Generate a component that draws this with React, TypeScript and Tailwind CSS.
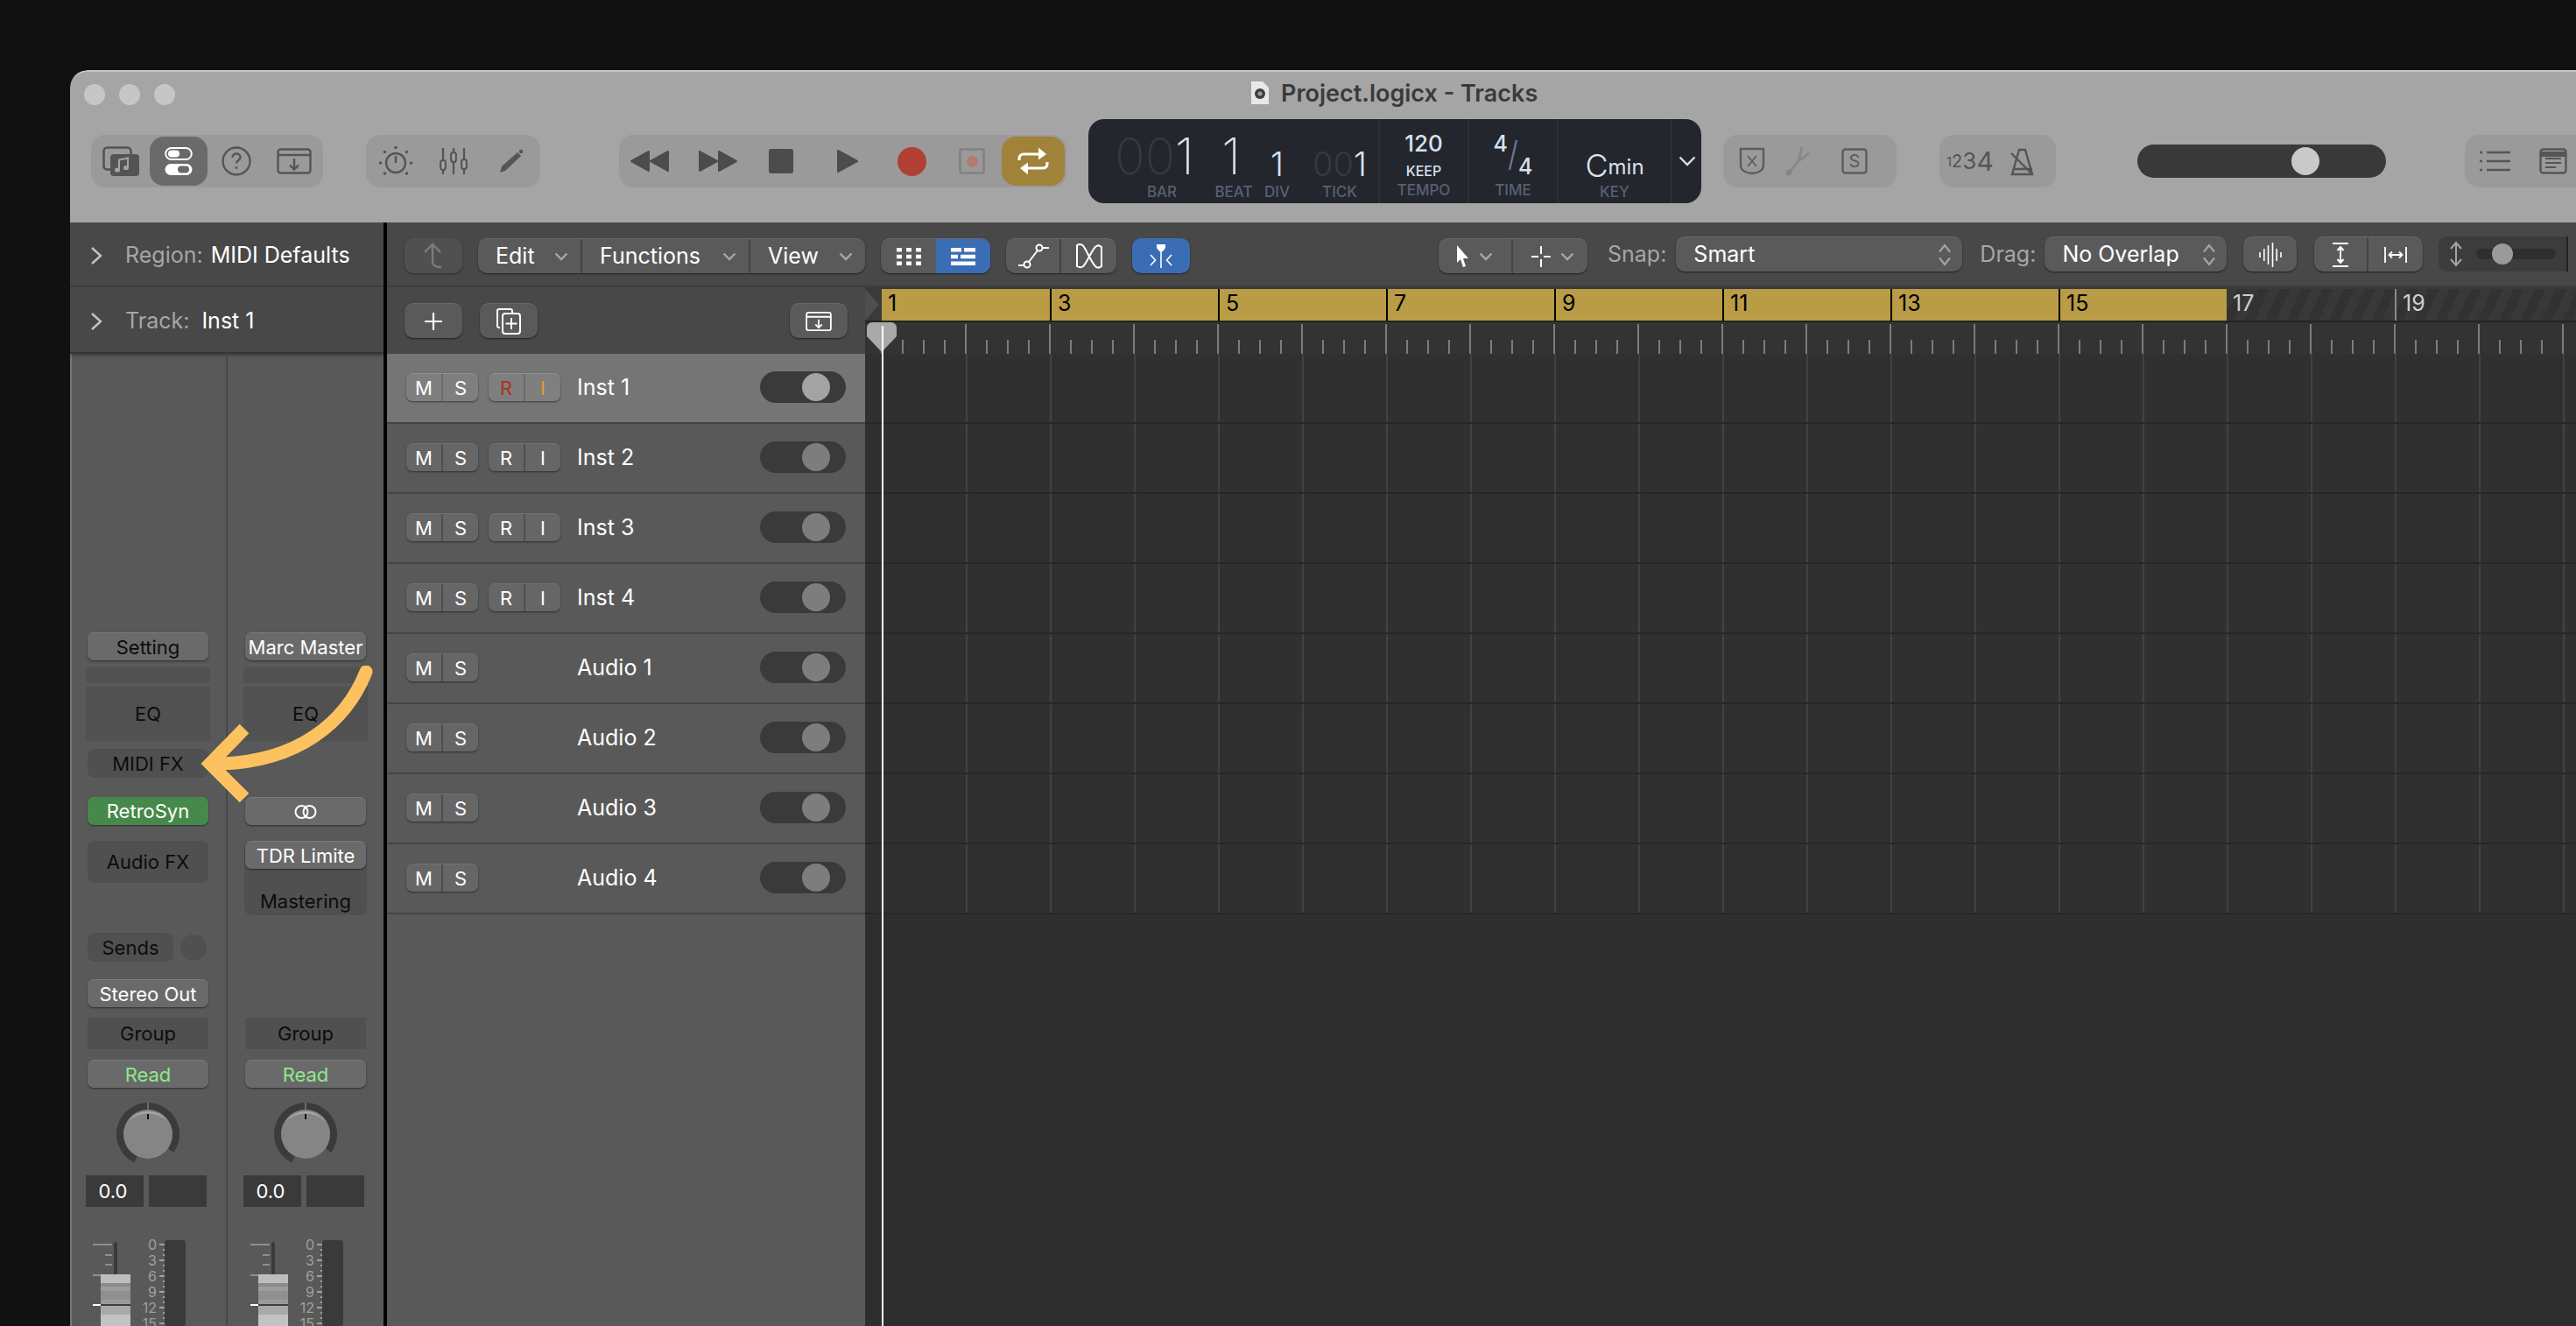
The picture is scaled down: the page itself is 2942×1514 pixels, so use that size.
const TRACKS = ['Inst 1', 'Inst 2', 'Inst 3', 'Inst 4', 'Audio 1', 'Audio 2', 'Audio 3', 'Audio 4'];
const BARS = Array.from({ length: 21 }, (_, i) => i);
const ODD_BARS = [1, 3, 5, 7, 9, 11, 13, 15];

const raised = 'bg-[#5a5a5a] border-t border-[#6a6a6a] shadow-[0_1px_2px_rgba(0,0,0,0.55)]';
const stripBtn = 'h-[32px] mx-[20px] rounded-[7px] bg-[#6a6a6a] border-t border-[#7c7c7c] shadow-[0_1px_2px_rgba(0,0,0,0.5)] flex items-center justify-center text-[22px] leading-none';
const stripSlot = 'mx-[18px] bg-[#515151] flex items-center justify-center text-[22px] leading-none text-[#0c0c0c]';

function Chevron({ className = '' }: { className?: string }) {
  return (
    <svg viewBox="0 0 16 10" className={`w-[16px] h-[10px] ${className}`} fill="none" stroke="#a8a8a8" strokeWidth="2.4">
      <path d="M1.5 1.5 8 8l6.5-6.5" />
    </svg>
  );
}

function UpDown() {
  return (
    <svg viewBox="0 0 16 26" className="w-[16px] h-[26px]" fill="none" stroke="#a3a3a3" strokeWidth="2.2">
      <path d="M2 9.5 8 2l6 7.5M2 16.5 8 24l6-7.5" />
    </svg>
  );
}

function Library() {
  return (
    <svg viewBox="0 0 42 34" className="w-[42px] h-[34px]">
      <rect x="1.5" y="1.5" width="31" height="25" rx="4" fill="none" stroke="#545454" strokeWidth="2.6" />
      <rect x="9" y="9" width="33" height="25" rx="4" fill="#545454" />
      <path d="M19 27V15.5l10-2V24" fill="none" stroke="#a5a5a5" strokeWidth="2" />
      <ellipse cx="17" cy="27" rx="3" ry="2.6" fill="#a5a5a5" />
      <ellipse cx="27" cy="24.5" rx="3" ry="2.6" fill="#a5a5a5" />
    </svg>
  );
}

function Toggles() {
  return (
    <svg viewBox="0 0 32 32" className="w-[32px] h-[32px]">
      <rect x="1.2" y="1" width="29.6" height="13" rx="6.5" fill="none" stroke="#fff" strokeWidth="2" />
      <rect x="4" y="3.5" width="13" height="8" rx="4" fill="#fff" />
      <rect x="0.5" y="19" width="31" height="13" rx="6.5" fill="#fff" />
      <rect x="15" y="21.5" width="13" height="8" rx="4" fill="#6a6a6a" />
    </svg>
  );
}

function Help() {
  return (
    <svg viewBox="0 0 34 34" className="w-[34px] h-[34px]" fill="none" stroke="#555" strokeWidth="2.4">
      <circle cx="17" cy="17" r="15.5" />
      <path d="M12.5 13c0-3 2-4.5 4.5-4.5s4.5 1.7 4.5 4c0 3.6-4.5 3.4-4.5 7" />
      <circle cx="17" cy="24.5" r="1.5" fill="#555" stroke="none" />
    </svg>
  );
}

function WindowDown({ color = '#555', size = 'w-[40px] h-[30px]' }: { color?: string; size?: string }) {
  return (
    <svg viewBox="0 0 40 30" className={size} fill="none" stroke={color} strokeWidth="2.4">
      <rect x="1.5" y="1.5" width="37" height="27" rx="3" />
      <path d="M1.5 8h37M20 12v12M15 19.5l5 5 5-5" />
    </svg>
  );
}

function KnobIcon() {
  return (
    <svg viewBox="0 0 40 36" className="w-[40px] h-[36px]" fill="#555">
      <circle cx="20" cy="20" r="11" fill="none" stroke="#555" strokeWidth="2.4" />
      <path d="M20 12v8" stroke="#555" strokeWidth="2.4" />
      <circle cx="20" cy="2.5" r="1.8" />
      <circle cx="7.5" cy="7.5" r="1.8" />
      <circle cx="32.5" cy="7.5" r="1.8" />
      <circle cx="2.5" cy="20" r="1.8" />
      <circle cx="37.5" cy="20" r="1.8" />
      <circle cx="7.5" cy="32" r="1.8" />
      <circle cx="32.5" cy="32" r="1.8" />
    </svg>
  );
}

function SlidersIcon() {
  return (
    <svg viewBox="0 0 32 32" className="w-[32px] h-[32px]" fill="#a5a5a5" stroke="#555" strokeWidth="2.2">
      <path d="M4 1v30M16 1v30M28 1v30" />
      <rect x="1.2" y="15" width="5.6" height="11" rx="2.8" />
      <rect x="13.2" y="6" width="5.6" height="11" rx="2.8" />
      <rect x="25.2" y="14" width="5.6" height="11" rx="2.8" />
    </svg>
  );
}

function PencilIcon() {
  return (
    <svg viewBox="0 0 28 28" className="w-[28px] h-[28px]">
      <path d="M1 27 3 20 21 4l4 4L7 25z" fill="#555" />
      <circle cx="25" cy="3" r="2.2" fill="#555" />
    </svg>
  );
}

function Transport() {
  const c = '#4c4c4c';
  return (
    <div className="ml-[49px] w-[511px] h-[60px] rounded-[16px] bg-[#9a9a9a] flex items-center">
      <svg viewBox="0 0 46 26" className="ml-[12px] w-[46px] h-[26px]" fill={c} stroke={c} strokeWidth="2" strokeLinejoin="round">
        <path d="M22 2v22L2 13zM44 2v22L24 13z" />
      </svg>
      <svg viewBox="0 0 46 26" className="ml-[32px] w-[46px] h-[26px]" fill={c} stroke={c} strokeWidth="2" strokeLinejoin="round">
        <path d="M2 2v22l20-11zM24 2v22l20-11z" />
      </svg>
      <div className="ml-[35px] w-[28px] h-[28px] rounded-[3px] bg-[#4c4c4c]" />
      <svg viewBox="0 0 26 28" className="ml-[49px] w-[26px] h-[28px]" fill={c} stroke={c} strokeWidth="2" strokeLinejoin="round">
        <path d="M2 2v24l22-12z" />
      </svg>
      <div className="ml-[44px] w-[33px] h-[33px] rounded-full bg-[#b23f33]" />
      <div className="ml-[37px] w-[30px] h-[30px] rounded-[3px] border-[3px] border-[#858585] flex items-center justify-center">
        <div className="w-[13px] h-[13px] rounded-full bg-[#b57a72]" />
      </div>
      <div className="ml-[19px] w-[72px] h-[56px] rounded-[16px] bg-[#a08238] flex items-center justify-center">
        <svg viewBox="0 0 36 32" className="w-[36px] h-[32px]" fill="none" stroke="#fff" strokeWidth="3.2">
          <path d="M2 15v-2c0-3 2-5 5-5h22" />
          <path d="M34 17v2c0 3-2 5-5 5H7" />
          <path d="M24 0.5 33 8l-9 6.5z" fill="#fff" stroke="none" />
          <path d="M12 17.500 3 24l9 7.500z" fill="#fff" stroke="none" />
        </svg>
      </div>
    </div>
  );
}

function LcdLabel({ children }: { children: string }) {
  return <div className="text-[17px] leading-none text-[#586074] font-medium">{children}</div>;
}

function Lcd() {
  return (
    <div className="ml-[25px] w-[700px] h-[96px] rounded-[18px] bg-[#24262d] flex text-[#d9e0ec]">
      <div className="w-[138px] pt-[8px] flex flex-col items-center">
        <div className="h-[65px] pl-[13px] flex items-end text-[57px] leading-[60px] font-extralight">
          <span className="text-[#353945]">00</span>1
        </div>
        <div className="mt-[2px] pl-[30px]"><LcdLabel>BAR</LcdLabel></div>
      </div>
      <div className="w-[50px] pt-[8px] flex flex-col items-center">
        <div className="h-[65px] flex items-end text-[57px] leading-[60px] font-extralight">1</div>
        <div className="mt-[2px] pl-[6px]"><LcdLabel>BEAT</LcdLabel></div>
      </div>
      <div className="w-[55px] pt-[8px] flex flex-col items-center">
        <div className="h-[65px] flex items-end text-[38px] leading-[44px] font-light">1</div>
        <div className="mt-[2px]"><LcdLabel>DIV</LcdLabel></div>
      </div>
      <div className="w-[90px] pt-[8px] border-r-2 border-[#2d3038] flex flex-col items-center">
        <div className="h-[65px] flex items-end text-[38px] leading-[44px] font-light">
          <span className="text-[#353945]">00</span>1
        </div>
        <div className="mt-[2px]"><LcdLabel>TICK</LcdLabel></div>
      </div>
      <div className="w-[102px] pt-[15px] border-r-2 border-[#2d3038] flex flex-col items-center">
        <div className="text-[26px] leading-[26px] font-medium">120</div>
        <div className="mt-[8px] h-[24px] text-[16px] leading-[20px] font-medium">KEEP</div>
        <LcdLabel>TEMPO</LcdLabel>
      </div>
      <div className="w-[102px] pt-[15px] border-r-2 border-[#2d3038] flex flex-col items-center">
        <div className="h-[58px] flex items-start text-[25px] leading-[26px] font-medium">
          4
          <svg viewBox="0 0 12 36" className="w-[12px] h-[36px] mt-[8px]" fill="none" stroke="#6c7488" strokeWidth="2.4">
            <path d="M10 1 2 35" />
          </svg>
          <span className="mt-[26px]">4</span>
        </div>
        <LcdLabel>TIME</LcdLabel>
      </div>
      <div className="w-[130px] pt-[8px] border-r-2 border-[#2d3038] flex flex-col items-center">
        <div className="h-[65px] flex items-end leading-[40px] font-light">
          <span className="text-[36px] leading-[40px]">C</span>
          <span className="text-[24px] leading-[36px] font-normal">min</span>
        </div>
        <div className="mt-[2px]"><LcdLabel>KEY</LcdLabel></div>
      </div>
      <div className="flex-1 flex items-center justify-center">
        <svg viewBox="0 0 20 12" className="w-[20px] h-[12px]" fill="none" stroke="#d9e0ec" strokeWidth="2.4">
          <path d="M1.500 1.500 10 10l8.500-8.500" />
        </svg>
      </div>
    </div>
  );
}

function TopBar() {
  return (
    <div className="h-[174px] shrink-0 bg-[#a5a5a5] border-t-2 border-[#c4c4c4] rounded-tl-[20px] flex flex-col">
      <div className="h-[54px] flex items-start">
        <div className="ml-[16px] mt-[14px] flex gap-[16px]">
          <div className="w-[24px] h-[24px] rounded-full bg-[#c6c6c6]" />
          <div className="w-[24px] h-[24px] rounded-full bg-[#c6c6c6]" />
          <div className="w-[24px] h-[24px] rounded-full bg-[#c6c6c6]" />
        </div>
        <svg viewBox="0 0 22 28" className="ml-[1228px] mt-[10px] w-[22px] h-[28px]">
          <path d="M1 1h13l7 7v19H1z" fill="#e8e8e8" />
          <circle cx="11" cy="15" r="6" fill="#3f3f3f" />
          <circle cx="11" cy="15" r="2.500" fill="#9aa0a8" />
        </svg>
        <div className="ml-[13px] mt-[10px] text-[27px] leading-[30px] font-semibold text-[#3a3a3a] whitespace-nowrap">Project.logicx - Tracks</div>
      </div>
      <div className="h-[96px] w-max flex items-center pl-[24px] whitespace-nowrap">
        <div className="w-[265px] h-[60px] rounded-[16px] bg-[#9a9a9a] flex items-center pl-[1px]">
          <div className="w-[66px] flex justify-center"><Library /></div>
          <div className="w-[66px] h-[56px] rounded-[16px] bg-[#6a6a6a] flex items-center justify-center"><Toggles /></div>
          <div className="w-[66px] flex justify-center"><Help /></div>
          <div className="w-[66px] flex justify-center"><WindowDown /></div>
        </div>
        <div className="ml-[49px] w-[199px] h-[60px] rounded-[16px] bg-[#9a9a9a] flex items-center pl-[1px]">
          <div className="w-[66px] flex justify-center"><KnobIcon /></div>
          <div className="w-[66px] flex justify-center"><SlidersIcon /></div>
          <div className="w-[66px] flex justify-center"><PencilIcon /></div>
        </div>
        <div className="ml-[41px]"><Transport /></div>
        <Lcd />
        <div className="ml-[25px] w-[198px] h-[60px] rounded-[16px] bg-[#9a9a9a] flex items-center pl-[18px]">
          <svg viewBox="0 0 30 32" className="w-[30px] h-[32px]" fill="none" stroke="#5c5c5c" strokeWidth="2.4">
            <path d="M2 2h26v19c0 5-6 9-13 9S2 26 2 21z" />
            <path d="M10 10l10 12M20 10 10 22" strokeWidth="1.800" />
          </svg>
          <svg viewBox="0 0 30 36" className="ml-[22px] w-[30px] h-[36px]" fill="none" stroke="#858585" strokeWidth="2.6">
            <path d="M6 30 16 18 20 2M16 18 28 9" />
            <circle cx="5" cy="31" r="3.500" fill="#858585" stroke="none" />
          </svg>
          <svg viewBox="0 0 30 30" className="ml-[35px] w-[30px] h-[30px]" fill="none" stroke="#5c5c5c" strokeWidth="2.4">
            <rect x="1.500" y="1.500" width="27" height="27" rx="3" />
            <text x="15" y="22" textAnchor="middle" fontSize="20" fill="#5c5c5c" stroke="none" fontFamily="Inter, sans-serif">S</text>
          </svg>
        </div>
        <div className="ml-[49px] w-[133px] h-[60px] rounded-[16px] bg-[#9a9a9a] flex items-center pl-[8px] text-[#555]">
          <span className="text-[15px] leading-none">1</span>
          <span className="text-[20px] leading-none">2</span>
          <span className="text-[26px] leading-none">3</span>
          <span className="text-[30px] leading-none">4</span>
          <svg viewBox="0 0 32 34" className="ml-[17px] w-[32px] h-[34px]" fill="none" stroke="#555" strokeWidth="2.4">
            <path d="M12 4h7l8 28H4zM3 8l22 22M5 26h22" />
          </svg>
        </div>
        <div className="ml-[93px] w-[284px] h-[38px] rounded-full bg-[#393939] flex items-center pl-[176px]">
          <div className="w-[32px] h-[32px] rounded-full bg-[#c9c9c9]" />
        </div>
        <div className="ml-[90px] w-[200px] h-[60px] rounded-[16px] bg-[#9a9a9a] flex items-center pl-[16px]">
          <svg viewBox="0 0 36 26" className="w-[36px] h-[26px]" fill="none" stroke="#555" strokeWidth="2.6">
            <path d="M9 3h27M9 13h27M9 23h27" />
            <path d="M1 3h4M1 13h4M1 23h4" strokeDasharray="3 1" />
          </svg>
          <svg viewBox="0 0 32 30" className="ml-[33px] w-[32px] h-[30px]" fill="none" stroke="#555" strokeWidth="2.4">
            <rect x="1.500" y="1.500" width="29" height="27" rx="3" />
            <path d="M1.500 7h29" strokeWidth="6" />
            <path d="M7 12h18M7 17h18M7 22h12" strokeWidth="2" />
          </svg>
        </div>
      </div>
    </div>
  );
}

function Knob() {
  return (
    <svg viewBox="0 0 72 72" className="mt-[17px] mx-auto w-[72px] h-[72px] shrink-0">
      <circle cx="36" cy="36" r="32" fill="none" stroke="#3b3b3b" strokeWidth="8" strokeDasharray="156 45" transform="rotate(116 36 36)" />
      <circle cx="36" cy="36" r="28" fill="#858585" />
      <path d="M13 22a28 28 0 0 1 46 0A32 32 0 0 0 13 22z" fill="#a8a8a8" />
      <path d="M36 0v8" stroke="#6fbf6f" strokeWidth="1" />
      <path d="M36 13v6" stroke="#111" strokeWidth="2" />
    </svg>
  );
}

function Fader() {
  const scale = [['0', 5], ['3', 23], ['6', 41], ['9', 59], ['12', 77], ['15', 95]] as const;
  return (
    <svg viewBox="0 0 124 98" className="mt-[38px] ml-[16px] w-[124px] h-[98px] shrink-0 overflow-visible">
      <rect x="34" y="2" width="4" height="40" rx="2" fill="#3a3a3a" />
      <path d="M10 5h22M24 17h8M24 28h8M10 40h9" stroke="#8f8f8f" strokeWidth="2" />
      <rect x="19" y="39" width="34" height="59" fill="#9a9a9a" />
      <rect x="19" y="39" width="34" height="10" fill="#bdbdbd" />
      <rect x="19" y="49" width="34" height="4" fill="#8a8a8a" />
      <rect x="19" y="53" width="34" height="5" fill="#9c9c9c" />
      <rect x="19" y="58" width="34" height="10" fill="#8f8f8f" />
      <rect x="19" y="68" width="34" height="5" fill="#9a9a9a" />
      <rect x="19" y="73" width="34" height="2" fill="#3f3f3f" />
      <rect x="19" y="75" width="34" height="10" fill="#a9a9a9" />
      <rect x="19" y="85" width="34" height="13" fill="#c2c2c2" />
      <rect x="10" y="73" width="9" height="2" fill="#fff" />
      <rect x="92" y="0" width="24" height="98" rx="3" fill="#3a3a3a" />
      {scale.map(([label, y]) => (
        <g key={label}>
          <text x="83" y={y + 5.5} textAnchor="end" fontSize="16" fontFamily="Inter, sans-serif" fill="#a0a0a0">{label}</text>
          <path d={`M86 ${y}h6`} stroke="#a0a0a0" strokeWidth="2" />
          <path d={`M90 ${y + 6}h2M90 ${y + 12}h2`} stroke="#a0a0a0" strokeWidth="2" />
        </g>
      ))}
    </svg>
  );
}

function ValueBoxes() {
  return (
    <div className="mt-[11px] mx-[18px] flex gap-[6px] h-[36px] shrink-0">
      <div className="w-[66px] bg-[#3a3a3a] flex items-center justify-center text-[22px] text-white leading-none pr-[4px]">0.0</div>
      <div className="w-[66px] bg-[#3a3a3a]" />
    </div>
  );
}

function GroupRead() {
  return (
    <>
      <div className="h-[36px] mx-[20px] bg-[#505050] flex items-center justify-center text-[22px] leading-none text-[#0c0c0c] shrink-0">Group</div>
      <div className={`${stripBtn} mt-[12px] text-[#8ee88a] shrink-0`}>Read</div>
      <Knob />
      <ValueBoxes />
      <Fader />
    </>
  );
}

function Inspector() {
  return (
    <div className="w-[358px] shrink-0 flex flex-col bg-[#595959] shadow-[inset_2px_0_0_#777] overflow-hidden">
      <div className="h-[74px] shrink-0 bg-[#484848] border-b-2 border-[#3e3e3e] flex items-center pl-[23px] pt-[3px] text-[25px] leading-none whitespace-nowrap">
        <svg viewBox="0 0 14 22" className="w-[14px] h-[22px]" fill="none" stroke="#c4c4c4" strokeWidth="2.4"><path d="M2 2l10 9-10 9" /></svg>
        <span className="ml-[26px] text-[#a6a6a6]">Region:</span>
        <span className="ml-[9px] text-white">MIDI Defaults</span>
      </div>
      <div className="h-[76px] shrink-0 bg-[#484848] border-b-2 border-[#363636] shadow-[0_2px_3px_rgba(0,0,0,0.3)] flex items-center pl-[23px] pt-[3px] text-[25px] leading-none whitespace-nowrap">
        <svg viewBox="0 0 14 22" className="w-[14px] h-[22px]" fill="none" stroke="#c4c4c4" strokeWidth="2.4"><path d="M2 2l10 9-10 9" /></svg>
        <span className="ml-[26px] text-[#a6a6a6]">Track:</span>
        <span className="ml-[14px] text-white">Inst 1</span>
      </div>
      <div className="flex-1 flex min-h-0">
        <div className="w-[180px] shrink-0 border-r-2 border-[#474747] flex flex-col">
          <div className={`${stripBtn} mt-[318px] text-[#0c0c0c] shrink-0`}>Setting</div>
          <div className={`${stripSlot} mt-[8px] h-[18px] shrink-0`} />
          <div className={`${stripSlot} mt-[4px] h-[62px] shrink-0`}>EQ</div>
          <div className="mt-[9px] mx-[20px] h-[33px] rounded-[8px] bg-[#505050] flex items-center justify-center text-[22px] leading-none text-[#0c0c0c] shrink-0">MIDI FX</div>
          <div className="mt-[22px] mx-[20px] h-[32px] rounded-[7px] bg-[#46894a] shadow-[0_1px_2px_rgba(0,0,0,0.5)] flex items-center justify-center text-[22px] leading-none text-white shrink-0">RetroSyn</div>
          <div className="mt-[18px] mx-[20px] h-[48px] rounded-[8px] bg-[#505050] flex items-center justify-center text-[22px] leading-none text-[#0c0c0c] shrink-0">Audio FX</div>
          <div className="mt-[57px] ml-[20px] flex items-center gap-[8px] shrink-0">
            <div className="w-[98px] h-[33px] rounded-[8px] bg-[#505050] flex items-center justify-center text-[22px] leading-none text-[#0c0c0c]">Sends</div>
            <div className="w-[30px] h-[30px] rounded-full bg-[#505050]" />
          </div>
          <div className={`${stripBtn} mt-[20px] text-white shrink-0`}>Stereo Out</div>
          <div className="mt-[12px]" />
          <GroupRead />
        </div>
        <div className="flex-1 flex flex-col">
          <div className={`${stripBtn} mt-[318px] text-white shrink-0`}>Marc Master</div>
          <div className={`${stripSlot} mt-[8px] h-[18px] shrink-0`} />
          <div className={`${stripSlot} mt-[4px] h-[62px] shrink-0`}>EQ</div>
          <div className={`${stripBtn} mt-[64px] shrink-0`}>
            <svg viewBox="0 0 26 16" className="w-[26px] h-[16px]" fill="none" stroke="#fff" strokeWidth="2">
              <circle cx="8.500" cy="8" r="7" />
              <circle cx="17.500" cy="8" r="7" />
            </svg>
          </div>
          <div className="mt-[18px] mx-[19px] h-[85px] rounded-[8px] bg-[#505050] flex flex-col shrink-0">
            <div className={`${stripBtn} !mx-[1px] text-white shrink-0`}>TDR Limite</div>
            <div className="flex-1 pt-[20px] flex items-center justify-center text-[22px] leading-none text-[#0c0c0c]">Mastering</div>
          </div>
          <div className="mt-[117px]" />
          <GroupRead />
        </div>
      </div>
    </div>
  );
}

function MsRi({ letters, selected }: { letters: string[]; selected?: boolean }) {
  const bg = selected ? 'bg-[#7f7f7f] border-[#8e8e8e]' : 'bg-[#666] border-[#727272]';
  const line = selected ? 'border-[#6a6a6a]' : 'border-[#4f4f4f]';
  return (
    <div className={`w-[82px] h-[32px] rounded-[7px] border-t shadow-[0_1px_2px_rgba(0,0,0,0.5)] flex text-[22px] leading-none text-white ${bg}`}>
      {letters.map((l, i) => (
        <div
          key={l}
          className={`flex-1 flex items-center justify-center ${i === 0 ? `border-r-2 ${line}` : ''} ${selected && l === 'R' ? 'text-[#b2301c]' : ''} ${selected && l === 'I' ? 'text-[#e29b2e]' : ''}`}
        >
          {l}
        </div>
      ))}
    </div>
  );
}

function TrackRow({ name, index }: { name: string; index: number }) {
  const selected = index === 0;
  return (
    <div className={`h-[80px] shrink-0 border-b-2 border-[#444] flex items-center pl-[22px] pb-[2px] ${selected ? 'bg-[#757575]' : 'bg-[#595959]'}`}>
      <MsRi letters={['M', 'S']} selected={selected} />
      <div className="ml-[12px] w-[82px]">{index < 4 && <MsRi letters={['R', 'I']} selected={selected} />}</div>
      <div className="ml-[19px] w-[209px] text-[25px] leading-none text-white">{name}</div>
      <div className="w-[98px] h-[36px] rounded-full bg-[#3a3a3a] flex items-center pl-[48px]">
        <div className={`w-[32px] h-[32px] rounded-full ${selected ? 'bg-[#a3a3a3]' : 'bg-[#7d7d7d]'}`} />
      </div>
    </div>
  );
}

function SquareBtn({ children, className = '' }: { children: React.ReactNode; className?: string }) {
  return <div className={`w-[66px] h-[40px] rounded-[10px] ${raised} flex items-center justify-center shrink-0 ${className}`}>{children}</div>;
}

function MenuItem({ label, width, last }: { label: string; width: string; last?: boolean }) {
  return (
    <div className={`${width} h-full flex items-center justify-between pl-[20px] pr-[14px] ${last ? '' : 'border-r-2 border-[#434343]'}`}>
      <span>{label}</span>
      <Chevron />
    </div>
  );
}

function EditorBar() {
  return (
    <div className="h-[74px] shrink-0 bg-[#484848] border-b-2 border-[#3d3d3d] flex items-center pl-[20px] text-[25px] leading-none text-white whitespace-nowrap">
      <div className="mt-[4px] w-[66px] h-[40px] rounded-[10px] bg-[#505050] shadow-[0_1px_2px_rgba(0,0,0,0.4)] flex items-center justify-center shrink-0">
        <svg viewBox="0 0 22 30" className="w-[22px] h-[30px]" fill="none" stroke="#7c7c7c" strokeWidth="2.4">
          <path d="M1 11 10 2l9 9M10 2v20c0 4 3 6 10 6" />
        </svg>
      </div>
      <div className={`mt-[4px] ml-[18px] w-[442px] h-[40px] rounded-[10px] ${raised} flex shrink-0`}>
        <MenuItem label="Edit" width="w-[119px]" />
        <MenuItem label="Functions" width="w-[192px]" />
        <MenuItem label="View" width="flex-1" last />
      </div>
      <div className={`mt-[4px] ml-[18px] w-[125px] h-[40px] rounded-[10px] ${raised} flex overflow-hidden shrink-0`}>
        <div className="w-[63px] flex items-center justify-center">
          <svg viewBox="0 0 28 20" className="w-[28px] h-[20px]" fill="#fff">
            <path d="M0 0h6v4.500H0zM11 0h6v4.500h-6zM22 0h6v4.500h-6zM0 7.700h6v4.500H0zM11 7.700h6v4.500h-6zM22 7.700h6v4.500h-6zM0 15.500h6V20H0zM11 15.500h6V20h-6zM22 15.500h6V20h-6z" />
          </svg>
        </div>
        <div className="flex-1 bg-[#3b6db5] flex items-center justify-center">
          <svg viewBox="0 0 28 20" className="w-[28px] h-[20px]" fill="#fff">
            <path d="M0 0h12v4.500H0zM15 0h13v4.500H15zM0 7.700h8v4.500H0zM11 7.700h17v4.500H11zM0 15.500h28V20H0z" />
          </svg>
        </div>
      </div>
      <div className={`mt-[4px] ml-[18px] w-[126px] h-[40px] rounded-[10px] ${raised} flex shrink-0`}>
        <div className="w-[63px] border-r-2 border-[#434343] flex items-center justify-center">
          <svg viewBox="0 0 36 30" className="w-[36px] h-[30px]" fill="none" stroke="#fff" strokeWidth="2">
            <circle cx="11" cy="24" r="3.500" />
            <circle cx="25" cy="5" r="3.500" />
            <path d="M1 25h6.500M13 21l10-13M28.500 5H36" />
          </svg>
        </div>
        <div className="flex-1 flex items-center justify-center">
          <svg viewBox="0 0 32 30" className="w-[32px] h-[30px]" fill="none" stroke="#fff" strokeWidth="2">
            <path d="M2 2v24c7 4 9-2 14-11S24-1 30 4v22c-6 5-9-2-14-11S9-2 2 2z" />
          </svg>
        </div>
      </div>
      <div className="mt-[4px] ml-[18px] w-[66px] h-[40px] rounded-[10px] bg-[#3b6db5] shadow-[0_1px_2px_rgba(0,0,0,0.55)] flex items-center justify-center shrink-0">
        <svg viewBox="0 0 26 28" className="w-[26px] h-[28px]" fill="none" stroke="#fff" strokeWidth="1.600">
          <path d="M8 1h10v4l-3 4h-4L8 5z" fill="#fff" stroke="none" />
          <path d="M13 8v20M1 13l5.500 6-5.500 6M25 13l-5.500 6 5.500 6" />
        </svg>
      </div>
      <div className={`mt-[4px] ml-[284px] w-[170px] h-[40px] rounded-[10px] ${raised} flex shrink-0`}>
        <div className="w-[85px] border-r-2 border-[#434343] flex items-center pl-[20px] gap-[10px]">
          <svg viewBox="0 0 16 26" className="w-[16px] h-[26px]" fill="#fff"><path d="M1 0v20l4-4 3 9 3-1-3-9h6z" /></svg>
          <Chevron />
        </div>
        <div className="flex-1 flex items-center pl-[20px] gap-[10px]">
          <svg viewBox="0 0 24 26" className="w-[24px] h-[26px]" fill="none" stroke="#fff" strokeWidth="2"><path d="M12 1v9M12 16v9M1 13h8M15 13h8" /></svg>
          <Chevron />
        </div>
      </div>
      <span className="ml-[23px] text-[#a6a6a6]">Snap:</span>
      <div className={`ml-[11px] w-[327px] h-[40px] rounded-[10px] ${raised} flex items-center justify-between pl-[20px] pr-[12px] shrink-0`}>
        <span>Smart</span>
        <UpDown />
      </div>
      <span className="ml-[20px] text-[#a6a6a6]">Drag:</span>
      <div className={`ml-[10px] w-[208px] h-[40px] rounded-[10px] ${raised} flex items-center justify-between pl-[20px] pr-[12px] shrink-0`}>
        <span>No Overlap</span>
        <UpDown />
      </div>
      <div className={`ml-[19px] w-[61px] h-[40px] rounded-[10px] ${raised} flex items-center justify-center shrink-0`}>
        <svg viewBox="0 0 26 30" className="w-[26px] h-[30px]" fill="none" stroke="#fff" strokeWidth="1.600">
          <path d="M1 12v6M5.800 8v14M10.500 4v22M15.500 1v28M20.200 8v14M25 12v6" />
        </svg>
      </div>
      <div className={`ml-[20px] w-[124px] h-[40px] rounded-[10px] ${raised} flex shrink-0`}>
        <div className="w-[62px] border-r-2 border-[#434343] flex items-center justify-center">
          <svg viewBox="0 0 18 28" className="w-[18px] h-[28px]" fill="none" stroke="#fff" strokeWidth="2">
            <path d="M0 1h18M0 27h18M9 6v16M5.500 9 9 5l3.500 4M5.500 19 9 23l3.500-4" />
          </svg>
        </div>
        <div className="flex-1 flex items-center justify-center">
          <svg viewBox="0 0 26 18" className="w-[26px] h-[18px]" fill="none" stroke="#fff" strokeWidth="1.800">
            <path d="M1 0v18M25 0v18M6 9h14M9 5.500 5.500 9 9 12.500M17 5.500 20.500 9 17 12.500" />
          </svg>
        </div>
      </div>
      <div className="ml-[18px] w-[148px] h-[40px] rounded-l-[10px] bg-[#3c3c3c] border-r-2 border-[#222] flex items-center pl-[12px] shrink-0">
        <svg viewBox="0 0 16 30" className="w-[16px] h-[30px]" fill="none" stroke="#a3a3a3" strokeWidth="2">
          <path d="M8 2v26M2 9l6-7 6 7M2 21l6 7 6-7" />
        </svg>
        <div className="ml-[15px] w-[91px] h-[12px] rounded-full bg-[#2f2f2f] flex items-center pl-[18px]">
          <div className="w-[24px] h-[24px] rounded-full bg-[#9a9a9a] shrink-0" />
        </div>
      </div>
    </div>
  );
}

function Ruler() {
  return (
    <div className="h-[76px] shrink-0 flex flex-col">
      <div className="h-[40px] shrink-0 flex border-t-2 border-b-2 border-t-[#3a3a3a] border-b-[#222] text-[25px] leading-none">
        <div className="w-[19px] shrink-0 bg-[#3a3a3a] flex items-center">
          <div className="w-0 h-0 border-y-[18px] border-y-transparent border-l-[16px] border-l-[#4f4f4f]" />
        </div>
        <div className="w-[1536px] shrink-0 bg-[#b99c45] flex text-black">
          {ODD_BARS.map((n, i) => (
            <div key={n} className={`w-[192px] h-full pl-[7px] pt-[4px] ${i > 0 ? 'border-l-2 border-black' : ''}`}>{n}</div>
          ))}
        </div>
        <div className="flex-1 flex text-[#cfcfcf] bg-[repeating-linear-gradient(115deg,#383838_0,#383838_11px,#323232_11px,#323232_22px)]">
          <div className="w-[192px] h-full shrink-0 pl-[7px] pt-[4px]">17</div>
          <div className="w-[192px] h-full shrink-0 pl-[7px] pt-[4px] border-l-2 border-[#8a8a8a]">19</div>
        </div>
      </div>
      <svg className="block w-[1954px] h-[36px] bg-[#333] shrink-0" viewBox="0 0 1954 36">
        {BARS.map((b) => (
          <g key={b} stroke="#7c7c7c" strokeWidth="2">
            <path d={`M${19 + b * 96} 2V36`} />
            <path d={`M${43 + b * 96} 20V36M${67 + b * 96} 20V36M${91 + b * 96} 20V36`} />
          </g>
        ))}
      </svg>
    </div>
  );
}

function Timeline() {
  return (
    <div className="flex-1 min-w-0 relative overflow-hidden bg-[#2e2e2e] flex flex-col">
      <Ruler />
      {TRACKS.map((t) => (
        <div key={t} className="h-[80px] shrink-0 bg-[#303030] border-b-2 border-[#272727] flex pl-[19px]">
          {BARS.map((b) => (
            <div key={b} className={`w-[96px] h-full shrink-0 ${b > 0 ? 'border-l-2 border-[#424242]' : ''}`} />
          ))}
        </div>
      ))}
      <svg viewBox="0 0 34 34" className="absolute left-[2px] top-[40px] w-[34px] h-[34px]">
        <path d="M6 0h22c3 0 6 3 6 6v10L17 34 0 16V6c0-3 3-6 6-6z" fill="#a9a9a9" />
      </svg>
      <div className="absolute left-[19px] top-[44px] bottom-0 w-[2px] bg-white" />
    </div>
  );
}

function Arrow() {
  return (
    <svg viewBox="0 0 210 160" className="absolute left-[220px] top-[760px] w-[210px] h-[160px]" fill="none" stroke="#fdc260" strokeWidth="15">
      <path d="M198 7C175 65 120 110 30 112" strokeLinecap="round" />
      <path d="M59 72 20 112l39 39" />
    </svg>
  );
}

export default function App() {
  return (
    <div className="relative w-[2942px] h-[1514px] overflow-hidden bg-[#111] pl-[80px] pt-[80px] font-['Inter',sans-serif]">
      <div className="w-[2862px] h-[1434px] rounded-tl-[20px] overflow-hidden flex flex-col bg-[#000]">
        <TopBar />
        <div className="flex-1 min-h-0 flex">
          <Inspector />
          <div className="w-[4px] shrink-0 bg-black" />
          <div className="flex-1 min-w-0 flex flex-col">
            <EditorBar />
            <div className="flex-1 min-h-0 flex">
              <div className="w-[546px] shrink-0 bg-[#595959] flex flex-col">
                <div className="h-[76px] shrink-0 bg-[#484848] flex items-center pl-[20px] pr-[20px]">
                  <SquareBtn>
                    <svg viewBox="0 0 22 22" className="w-[22px] h-[22px]" fill="none" stroke="#fff" strokeWidth="2.200"><path d="M11 1v20M1 11h20" /></svg>
                  </SquareBtn>
                  <SquareBtn className="ml-[20px]">
                    <svg viewBox="0 0 28 30" className="w-[28px] h-[30px]" fill="none" stroke="#fff" strokeWidth="2">
                      <path d="M4 22H3a2 2 0 0 1-2-2V3a2 2 0 0 1 2-2h13a2 2 0 0 1 2 2v3" />
                      <rect x="7" y="6" width="20" height="23" rx="3" />
                      <path d="M17 11v13M10.500 17.500h13" />
                    </svg>
                  </SquareBtn>
                  <SquareBtn className="ml-auto"><WindowDown color="#fff" size="w-[30px] h-[24px]" /></SquareBtn>
                </div>
                {TRACKS.map((t, i) => (
                  <TrackRow key={t} name={t} index={i} />
                ))}
              </div>
              <Timeline />
            </div>
          </div>
        </div>
      </div>
      <Arrow />
    </div>
  );
}
